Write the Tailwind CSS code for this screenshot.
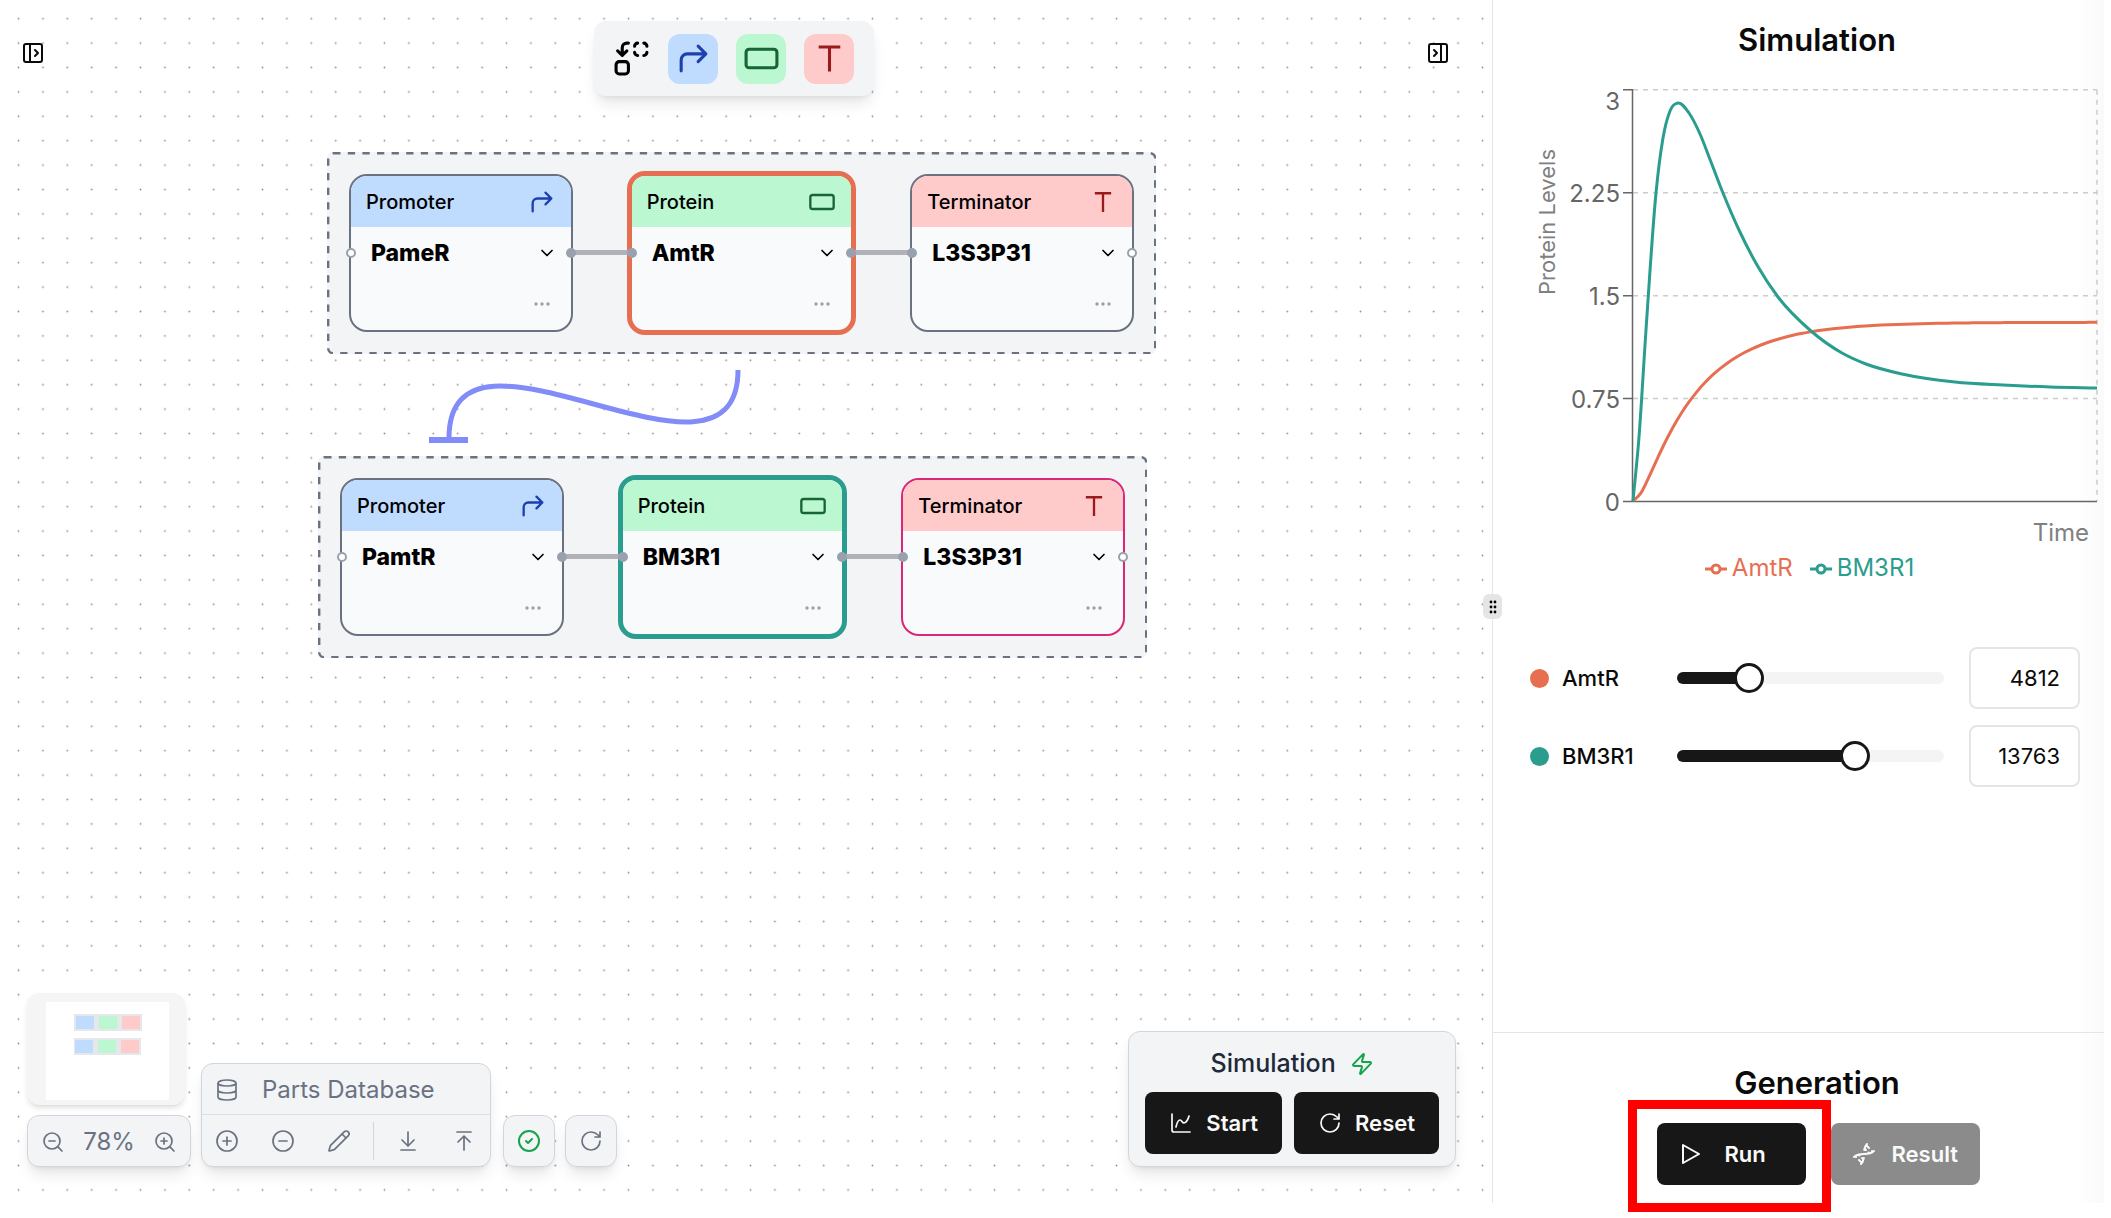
<!DOCTYPE html>
<html lang="en">
<head>
<meta charset="utf-8">
<title>Circuit Designer</title>
<script src="https://cdn.jsdelivr.net/npm/@tailwindcss/browser@4"></script>
</head>
<body class="bg-white font-['Inter',sans-serif] text-neutral-950">
<svg class="hidden" aria-hidden="true">
  <symbol id="i-promoter" viewBox="0 0 24 24"><path d="m15 14 5-5-5-5M4 20v-7a4 4 0 0 1 4-4h12"/></symbol>
  <symbol id="i-protein" viewBox="0 0 24 24"><rect x="2" y="6" width="20" height="12" rx="2"/></symbol>
  <symbol id="i-terminator" viewBox="0 0 24 24"><path d="M5 4.5h14M12 4.5v16" stroke-linecap="butt"/></symbol>
  <symbol id="i-chevron" viewBox="0 0 24 24"><path d="m6 9 6 6 6-6"/></symbol>
  <symbol id="i-rotate" viewBox="0 0 24 24"><path d="M21 12a9 9 0 1 1-9-9c2.52 0 4.93 1 6.74 2.74L21 8M21 3v5h-5"/></symbol>
</svg>

<div class="flex h-screen pb-[15px] pr-[7px]">
  <main class="relative min-w-0 flex-1">
    <svg class="absolute inset-0 size-full" aria-hidden="true">
      <defs><pattern id="dots" x="6.3" y="6.5" width="24.4" height="24.4" patternUnits="userSpaceOnUse"><circle cx="12.2" cy="12.2" r="0.9" fill="#91919a"/></pattern></defs>
      <rect width="100%" height="100%" fill="url(#dots)"/>
    </svg>

    <button aria-label="Open parts panel" class="absolute left-[21px] top-[41px]"><svg class="size-6 fill-none stroke-neutral-950 stroke-2" stroke-linecap="round" stroke-linejoin="round" viewBox="0 0 24 24"><rect width="18" height="18" x="3" y="3" rx="2"/><path d="M9 3v18m5-12 3 3-3 3"/></svg></button>
    <button aria-label="Close side panel" class="absolute right-[42px] top-[41px]"><svg class="size-6 fill-none stroke-neutral-950 stroke-2" stroke-linecap="round" stroke-linejoin="round" viewBox="0 0 24 24"><rect width="18" height="18" x="3" y="3" rx="2"/><path d="M15 3v18M8 9l3 3-3 3"/></svg></button>

    <div class="absolute left-[594px] top-[21px] flex h-[75px] items-center gap-[18px] rounded-xl bg-gray-100 pl-[19px] pr-5 shadow-lg">
      <button aria-label="Replace"><svg class="size-[37px] fill-none stroke-black stroke-2" stroke-linecap="round" stroke-linejoin="round" viewBox="0 0 24 24"><path d="M14 4c0-1.1.9-2 2-2M20 2c1.1 0 2 .9 2 2M22 8c0 1.1-.9 2-2 2M16 10c-1.1 0-2-.9-2-2M3 7l3 3 3-3M6 10V5c0-1.7 1.3-3 3-3h1"/><rect width="8" height="8" x="2" y="14" rx="2"/></svg></button>
      <button aria-label="Promoter" class="flex size-[50px] items-center justify-center rounded-xl bg-[#bfdbfe]"><svg class="size-[37px] fill-none stroke-[#1e40af] stroke-2" stroke-linecap="round" stroke-linejoin="round"><use href="#i-promoter"/></svg></button>
      <button aria-label="Protein" class="flex size-[50px] items-center justify-center rounded-xl bg-[#bbf7d0]"><svg class="size-[37px] fill-none stroke-[#166534] stroke-2" stroke-linejoin="round"><use href="#i-protein"/></svg></button>
      <button aria-label="Terminator" class="flex size-[50px] items-center justify-center rounded-xl bg-[#fecaca]"><svg class="size-[37px] fill-none stroke-[#991b1b] stroke-2"><use href="#i-terminator"/></svg></button>
    </div>

    <div id="circuits"></div>

    <svg class="absolute left-[420px] top-[360px] h-[90px] w-[340px] fill-none stroke-[#818cf8]" viewBox="0 0 340 90" aria-hidden="true">
      <path stroke-width="5" d="M318 10C318 156 29 -68 29 78"/><path stroke-width="6" d="M9 80h39"/>
    </svg>

    <div class="absolute bottom-[36px] left-[27px] flex items-end gap-[10px]">
      <div class="flex w-[164px] flex-col gap-[10px]">
        <div class="h-[112px] w-[158px] overflow-hidden rounded-xl bg-neutral-100 shadow-md">
          <svg class="size-full" viewBox="0 0 158 112" role="img" aria-label="Mini map">
            <rect x="19" y="9" width="123" height="98" fill="#fff"/>
            <g fill="#e5e7eb"><rect x="47" y="21" width="68" height="17"/><rect x="47" y="45" width="67" height="17"/></g>
            <g fill="#bfdbfe"><rect x="49" y="23" width="18" height="13"/><rect x="48" y="47" width="18" height="13"/></g>
            <g fill="#bbf7d0"><rect x="72" y="23" width="18" height="13"/><rect x="71" y="47" width="18" height="13"/></g>
            <g fill="#fecaca"><rect x="95" y="23" width="18" height="13"/><rect x="94" y="47" width="18" height="13"/></g>
          </svg>
        </div>
        <div class="flex h-[52px] items-center justify-between rounded-xl border border-gray-300 bg-gray-100 px-[13px] pt-px text-gray-500 shadow-lg">
          <button aria-label="Zoom out"><svg class="size-6 fill-none stroke-current stroke-[1.7]" stroke-linecap="round" viewBox="0 0 24 24"><circle cx="11" cy="11" r="8"/><path d="m21 21-4.35-4.35M8 11h6"/></svg></button>
          <span class="text-2xl">78%</span>
          <button aria-label="Zoom in"><svg class="size-6 fill-none stroke-current stroke-[1.7]" stroke-linecap="round" viewBox="0 0 24 24"><circle cx="11" cy="11" r="8"/><path d="m21 21-4.35-4.35M8 11h6M11 8v6"/></svg></button>
        </div>
      </div>
      <div class="w-[290px] rounded-xl border border-gray-300 bg-gray-100 text-gray-500 shadow-lg">
        <div class="flex h-[51px] items-center gap-[23px] border-b border-gray-300/70 px-[13px] pt-0.5 text-2xl">
          <svg class="size-6 fill-none stroke-current stroke-[1.7]" viewBox="0 0 24 24"><ellipse cx="12" cy="5" rx="9" ry="3"/><path d="M3 5v14a9 3 0 0 0 18 0V5M3 12a9 3 0 0 0 18 0"/></svg>
          <span>Parts Database</span>
        </div>
        <div class="flex h-[51px] items-center px-[13px]">
          <button aria-label="Add part"><svg class="size-6 fill-none stroke-current stroke-[1.7]" stroke-linecap="round" viewBox="0 0 24 24"><circle cx="12" cy="12" r="10"/><path d="M8 12h8M12 8v8"/></svg></button>
          <button aria-label="Remove part" class="ml-8"><svg class="size-6 fill-none stroke-current stroke-[1.7]" stroke-linecap="round" viewBox="0 0 24 24"><circle cx="12" cy="12" r="10"/><path d="M8 12h8"/></svg></button>
          <button aria-label="Edit part" class="ml-8"><svg class="size-6 fill-none stroke-current stroke-[1.7]" stroke-linecap="round" stroke-linejoin="round" viewBox="0 0 24 24"><path d="M21.174 6.812a1 1 0 0 0-3.986-3.987L3.842 16.174a2 2 0 0 0-.5.83l-1.321 4.352a.5.5 0 0 0 .623.622l4.353-1.32a2 2 0 0 0 .83-.497zM15 5l4 4"/></svg></button>
          <div class="mx-[22px] h-[38px] w-px bg-gray-300"></div>
          <button aria-label="Import parts"><svg class="size-6 fill-none stroke-current stroke-[1.7]" stroke-linecap="round" stroke-linejoin="round" viewBox="0 0 24 24"><path d="M12 17V3M6 11l6 6 6-6M19 21H5"/></svg></button>
          <button aria-label="Export parts" class="ml-8"><svg class="size-6 fill-none stroke-current stroke-[1.7]" stroke-linecap="round" stroke-linejoin="round" viewBox="0 0 24 24"><path d="M5 3h14M18 13l-6-6-6 6M12 7v14"/></svg></button>
        </div>
      </div>
      <div class="flex gap-[10px] pl-0.5">
        <button aria-label="Status" class="flex size-[52px] items-center justify-center rounded-xl border border-gray-300 bg-gray-100 shadow-lg"><svg class="size-6 fill-none stroke-[#16a34a] stroke-2" stroke-linecap="round" stroke-linejoin="round" viewBox="0 0 24 24"><circle cx="12" cy="12" r="10"/><path d="m9 12 2 2 4-4"/></svg></button>
        <button aria-label="Refresh" class="flex size-[52px] items-center justify-center rounded-xl border border-gray-300 bg-gray-100 text-gray-500 shadow-lg"><svg class="size-6 fill-none stroke-current stroke-[1.7]" stroke-linecap="round" stroke-linejoin="round"><use href="#i-rotate"/></svg></button>
      </div>
    </div>

    <section class="absolute bottom-[36px] right-[36px] rounded-xl border border-gray-300 bg-gray-100 px-4 pb-3 pt-4 shadow-lg">
      <h2 class="flex h-8 items-center justify-center gap-[14px] text-[25px] font-medium text-gray-800">Simulation
        <svg class="size-6 fill-none stroke-[#16a34a] stroke-2" stroke-linejoin="round" viewBox="0 0 24 24"><path d="M4 14a1 1 0 0 1-.78-1.63l9.9-10.2a.5.5 0 0 1 .86.46l-1.92 6.02A1 1 0 0 0 13 10h7a1 1 0 0 1 .78 1.63l-9.9 10.2a.5.5 0 0 1-.86-.46l1.92-6.02A1 1 0 0 0 11 14z"/></svg></h2>
      <div class="mt-3 flex gap-3">
        <button class="flex h-[62px] items-center gap-[13px] rounded-lg bg-neutral-900 px-6 text-[22px] font-semibold text-neutral-50"><svg class="size-6 fill-none stroke-current stroke-[1.7]" stroke-linecap="round" stroke-linejoin="round" viewBox="0 0 24 24"><path d="M3 3v16a2 2 0 0 0 2 2h16M7 16c.5-2 1.5-7 4-7 2 0 2 3 4 3 2.5 0 4.5-5 5-7"/></svg>Start</button>
        <button class="flex h-[62px] items-center gap-[13px] rounded-lg bg-neutral-900 px-6 text-[22px] font-semibold text-neutral-50"><svg class="size-6 fill-none stroke-current stroke-[1.7]" stroke-linecap="round" stroke-linejoin="round"><use href="#i-rotate"/></svg>Reset</button>
      </div>
    </section>
  </main>

  <aside class="relative flex w-[612px] flex-none flex-col border-l border-neutral-200">
    <div class="pointer-events-none absolute inset-y-0 right-0 w-7 bg-linear-to-l from-neutral-50 to-transparent"></div>
    <div role="separator" class="absolute -left-[10px] top-[594px] flex h-[25px] w-[19px] items-center justify-center rounded-md bg-neutral-200">
      <svg class="h-4 w-2 fill-black" viewBox="0 0 8 16"><circle cx="2" cy="3" r="1.4"/><circle cx="6" cy="3" r="1.4"/><circle cx="2" cy="8" r="1.4"/><circle cx="6" cy="8" r="1.4"/><circle cx="2" cy="13" r="1.4"/><circle cx="6" cy="13" r="1.4"/></svg>
    </div>
    <section class="relative flex-1">
      <h2 class="pl-[37px] pt-[22px] text-center text-[31px]/9 font-semibold">Simulation</h2>
      <svg class="mt-3 h-[480px] w-full font-['Inter'] text-2xl" viewBox="1493 70 611 480" role="img" aria-label="Protein levels over time">
        <g stroke="#ccc" stroke-width="1.5" stroke-dasharray="5 5"><path d="M1633 89.7H2097M1633 192.7H2097M1633 295.7H2097M1633 398.5H2097M2097 89.7V501"/></g>
        <path stroke="#666" stroke-width="1.5" fill="none" d="M1632.5 89V501.5H2097M1623 89.7h9.5M1623 192.7h9.5M1623 295.7h9.5M1623 398.5h9.5M1623 501.5h9.5"/>
        <g fill="#666" text-anchor="end"><text x="1620" y="110">3</text><text x="1620" y="202">2.25</text><text x="1620" y="305">1.5</text><text x="1620" y="408">0.75</text><text x="1620" y="511">0</text></g>
        <g fill="#808080"><text class="text-[22px]" transform="translate(1555 222) rotate(-90)" text-anchor="middle">Protein Levels</text><text x="2089" y="541" text-anchor="end">Time</text></g>
        <g id="curves" fill="none" stroke-width="3"></g>
      </svg>
      <ul class="flex h-9 items-center justify-center gap-4 pl-[21px] text-2xl">
        <li class="flex items-center gap-1 text-[#e76f51]"><svg class="size-6 fill-none stroke-current stroke-[3]" viewBox="0 0 24 24"><path d="M1 13h7M16 13h7"/><circle cx="12" cy="13" r="4"/></svg>AmtR</li>
        <li class="flex items-center gap-1 text-[#2a9d8f]"><svg class="size-6 fill-none stroke-current stroke-[3]" viewBox="0 0 24 24"><path d="M1 13h7M16 13h7"/><circle cx="12" cy="13" r="4"/></svg>BM3R1</li>
      </ul>
      <div id="sliders" class="mt-[61px] flex flex-col gap-4 pl-[37px] pr-6"></div>
    </section>
    <section class="relative h-[171px] border-t border-neutral-200 pl-[37px]">
      <h2 class="pt-[32px] text-center text-[31px]/9 font-semibold">Generation</h2>
      <div class="mt-[22px] flex justify-center gap-[25px] pl-0.5">
        <div class="relative">
          <button class="flex h-[62px] w-[149px] items-center gap-[22px] rounded-lg bg-neutral-900 pl-[22px] text-[22px] font-semibold text-neutral-50"><svg class="size-6 fill-none stroke-current stroke-2" stroke-linejoin="round" viewBox="0 0 24 24"><path d="M4 3 20 12 4 21Z"/></svg>Run</button>
          <div class="pointer-events-none absolute -bottom-[27px] -left-[29px] -right-[25px] -top-[23px] border-[9px] border-[#ff0000]"></div>
        </div>
        <button disabled class="flex h-[62px] w-[149px] items-center gap-[16px] rounded-lg bg-[#8b8b8b] pl-[21px] text-[22px] font-semibold text-neutral-50"><svg class="size-6 fill-none stroke-current stroke-2" stroke-linecap="round" viewBox="0 0 24 24"><path d="m10 16 1.5 1.5M14 8l-1.5-1.5M15 2c-1.798 1.998-2.518 3.995-2.807 5.993M16.5 10.5l1 1M17 6l-2.891-2.891M2 15c6.667-6 13.333 0 20-6M20 9l.891.891M3.109 14.109 4 15M6.5 12.5l1 1M7 18l2.891 2.891M9 22c1.798-1.998 2.518-3.995 2.807-5.993"/></svg>Result</button>
      </div>
    </section>
  </aside>
</div>

<script>
const handle = (side, on) => `<span class="absolute top-[74px] size-[10px] rounded-full border-2 border-gray-400 ${side} ${on ? 'bg-gray-400' : 'bg-white'}"></span>`;
const kinds = {
  Promoter: ['bg-[#bfdbfe]', 'stroke-[#1e40af]', 'i-promoter'],
  Protein: ['bg-[#bbf7d0]', 'stroke-[#166534]', 'i-protein'],
  Terminator: ['bg-[#fecaca]', 'stroke-[#991b1b]', 'i-terminator'],
};
const circuits = [
  { pos: 'left-[327px] top-[152px]', parts: [['Promoter', 'PameR', 'border-2 border-gray-500'], ['Protein', 'AmtR', '-m-[3px] border-5 border-[#e76f51]'], ['Terminator', 'L3S3P31', 'border-2 border-gray-500']] },
  { pos: 'left-[318px] top-[456px]', parts: [['Promoter', 'PamtR', 'border-2 border-gray-500'], ['Protein', 'BM3R1', '-m-[3px] border-5 border-[#2a9d8f]'], ['Terminator', 'L3S3P31', 'border-2 border-[#db2777]']] },
];
document.getElementById('circuits').innerHTML = circuits.map(c => `
  <div class="absolute ${c.pos} flex h-[202px] w-[829px] gap-[57px] rounded-md bg-gray-100 px-[22px] pt-[22px]">
    <svg class="absolute inset-0 size-full fill-none stroke-gray-500 stroke-[2.4]"><rect x="1.2" y="1.2" class="h-[calc(100%-2px)] w-[calc(100%-2px)]" rx="5" stroke-dasharray="7.3 7.3"/></svg>
    ${c.parts.map(([kind, name, border], i) => `
    <div class="relative h-[158px] w-[224px]">
      <article class="absolute inset-0 ${border} overflow-hidden rounded-[18px] bg-gray-50">
        <header class="flex h-[51px] items-center justify-between px-[15px] text-xl font-medium text-black ${kinds[kind][0]}">${kind}<svg class="size-7 fill-none stroke-2 ${kinds[kind][1]}" stroke-linecap="round" stroke-linejoin="round"><use href="#${kinds[kind][2]}"/></svg></header>
        <button class="flex h-[52px] w-full items-center justify-between pl-5 pr-[14px] text-[23px] font-extrabold text-black">${name}<svg class="size-5 fill-none stroke-2 stroke-black" stroke-linecap="round" stroke-linejoin="round"><use href="#i-chevron"/></svg></button>
        <button aria-label="More" class="ml-auto mr-[21px] mt-5 block"><svg class="h-[10px] w-4 fill-gray-400" viewBox="0 0 16 10"><circle cx="2" cy="5" r="1.7"/><circle cx="8" cy="5" r="1.7"/><circle cx="14" cy="5" r="1.7"/></svg></button>
      </article>
      ${i < 2 ? '<span class="absolute left-[222px] top-[76px] z-10 h-[5px] w-[61px] bg-[#b1b1b7]"></span>' : ''}
      <div class="absolute inset-0 z-20">${handle('-left-[3px]', i > 0)}${handle('-right-[3px]', i < 2)}</div>
    </div>`).join('')}
  </div>`).join('');

// AmtR: two-stage expression response; BM3R1: sampled trace
const amtr = Array.from({ length: 59 }, (_, i) => {
  const t = Math.min(i * 8, 464), a = 0.01745, b = 0.1118;
  return [1633 + t, 501 - 178.7 * (1 - (b * Math.exp(-a * t) - a * Math.exp(-b * t)) / (b - a))];
});
const bm3r1 = [[0,0],[6,64],[13,171],[23,308],[30,363],[37,390],[45,398],[56,388],[67,367],[78,339],[90,308],[106,271],[124,236],[145,204],[178,170],[209,148],[233,137],[269,127],[322,119],[370,116],[417,114],[464,113]].map(([t, v]) => [1633 + t, 501 - v]);
// Cubic Hermite curve with tangents weighted by the interval widths
const curve = p => {
  const s = p.slice(1).map((b, i) => (b[1] - p[i][1]) / (b[0] - p[i][0]));
  const m = p.map((q, i) => {
    if (i === 0) return s[0];
    if (i === p.length - 1) return s[i - 1];
    const h0 = q[0] - p[i - 1][0], h1 = p[i + 1][0] - q[0];
    return (s[i - 1] * h1 + s[i] * h0) / (h0 + h1);
  });
  return p.slice(1).reduce((d, b, i) => {
    const a = p[i], h = (b[0] - a[0]) / 3;
    return d + `C${a[0] + h} ${a[1] + m[i] * h} ${b[0] - h} ${b[1] - m[i + 1] * h} ${b[0]} ${b[1]}`;
  }, `M${p[0]}`);
};
document.getElementById('curves').innerHTML = `<path stroke="#e76f51" d="${curve(amtr)}"/><path stroke="#2a9d8f" d="${curve(bm3r1)}"/>`;

document.getElementById('sliders').innerHTML = [['AmtR', 4812, 'bg-[#e76f51]'], ['BM3R1', 13763, 'bg-[#2a9d8f]']].map(([n, v, c]) => `
  <div class="flex h-[62px] items-center">
    <span class="mr-[13px] size-[19px] rounded-full ${c}"></span>
    <label for="r-${n}" class="w-[115px] text-[22px] font-medium">${n}</label>
    <input id="r-${n}" type="range" min="0" max="20000" value="${v}" style="background-image:linear-gradient(to right,#171717 ${v / 200}%,#f4f4f5 ${v / 200}%)" class="h-3 min-w-0 flex-1 appearance-none rounded-full [&::-webkit-slider-thumb]:size-[30px] [&::-webkit-slider-thumb]:appearance-none [&::-webkit-slider-thumb]:rounded-full [&::-webkit-slider-thumb]:border-3 [&::-webkit-slider-thumb]:border-neutral-900 [&::-webkit-slider-thumb]:bg-white">
    <input aria-label="${n} value" type="text" value="${v}" class="ml-[25px] h-[62px] w-[111px] rounded-lg border-2 border-neutral-200 px-[18px] text-right text-[22px]">
  </div>`).join('');
</script>
</body>
</html>
